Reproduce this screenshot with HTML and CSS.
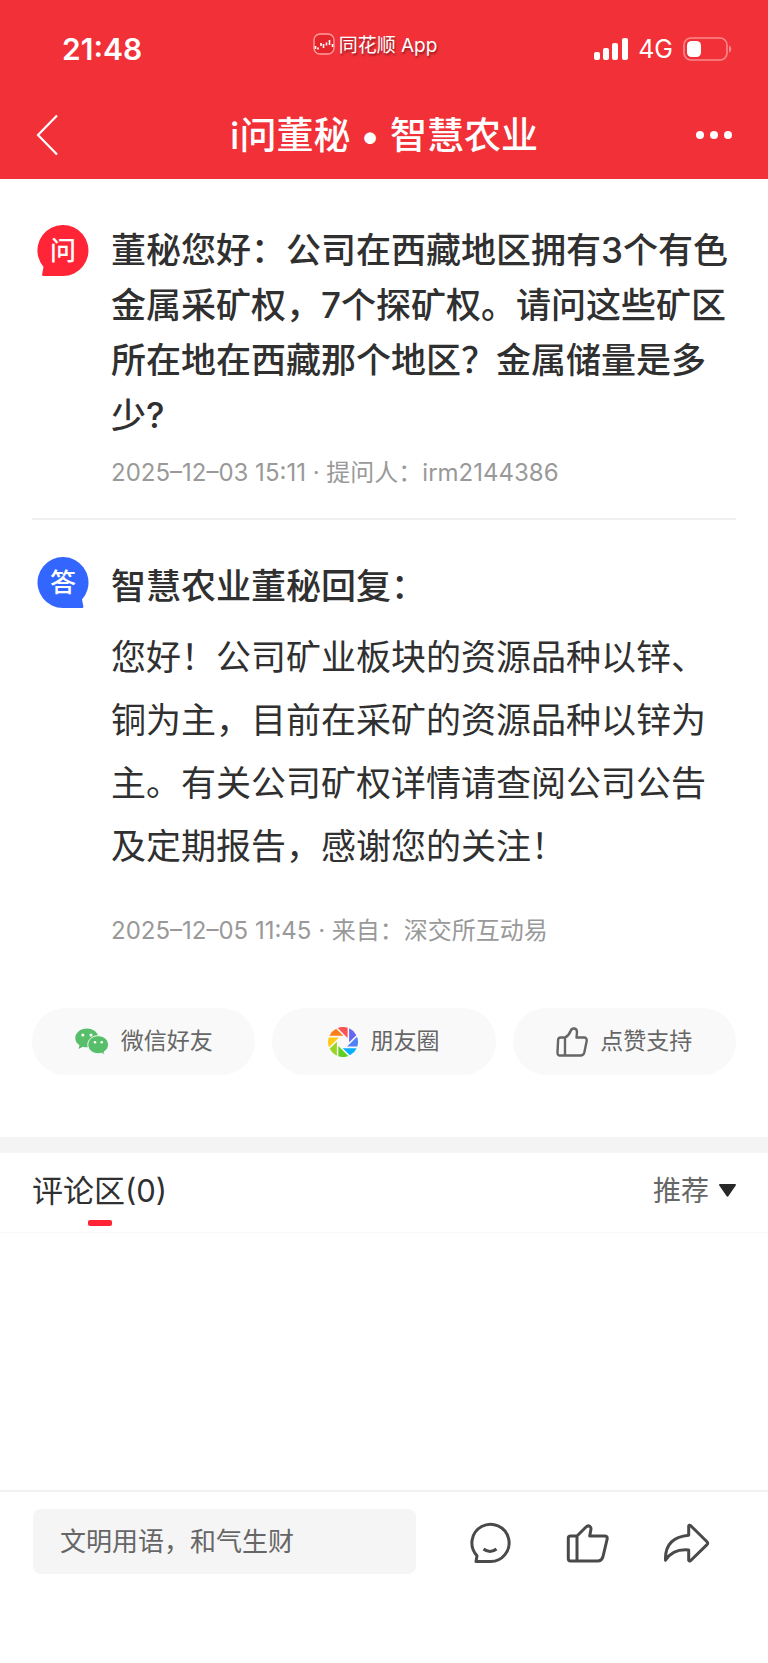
FILE: index.html
```html
<!DOCTYPE html>
<html lang="zh-CN">
<head>
  <meta charset="UTF-8" />
  <meta name="viewport" content="width=device-width, initial-scale=1.0"/>
  <title>i问董秘 · 智慧农业</title>
  <link rel="stylesheet" href="styles.css">
</head>
<body>
  <header>
    <div class="status">
      <span class="time">21:48</span>
      <span class="app-name">
        <svg width="22" height="22" viewBox="0 0 22 22">
          <rect x="1" y="1" width="20" height="20" rx="6" fill="#e5252c" stroke="#ff9a9d" stroke-width="1.4"/>
          <path d="M2.5 13v3M5 14.5v2M8 10v3M10.5 11v4M13.5 9.5v3M16.5 7v5M19.5 11v3" stroke="#fff" stroke-width="1.6"/>
        </svg>
        <span>同花顺 App</span>
      </span>
      <span class="signal">
        <svg width="34" height="22" viewBox="0 0 34 22" fill="#fff">
          <rect x="0" y="14" width="6" height="8" rx="2"/>
          <rect x="9" y="10" width="6" height="12" rx="2"/>
          <rect x="18" y="5" width="6" height="17" rx="2"/>
          <rect x="28" y="0" width="6" height="22" rx="2"/>
        </svg>
        <span>4G</span>
        <svg width="49" height="24" viewBox="0 0 49 24">
          <rect x="1" y="1" width="43" height="22" rx="7" fill="none" stroke="#fa898d" stroke-width="1.6"/>
          <path d="M46 8.5c3 1 3 6 0 7z" fill="#fa898d"/>
          <rect x="4" y="4" width="14" height="16" rx="4.5" fill="#fff"/>
        </svg>
      </span>
    </div>
    <nav>
      <button class="icon-btn" aria-label="返回">
        <svg width="22" height="42" viewBox="0 0 22 42" fill="none" stroke="#fff" stroke-width="2.2">
          <path d="M21 1.5L2 21l19 19.5"/>
        </svg>
      </button>
      <h1>i问董秘 • 智慧农业</h1>
      <button class="icon-btn" aria-label="更多">
        <svg width="36" height="10" viewBox="0 0 36 10" fill="#fff">
          <circle cx="4" cy="5" r="4"/>
          <circle cx="18" cy="5" r="4"/>
          <circle cx="32" cy="5" r="4"/>
        </svg>
      </button>
    </nav>
  </header>

  <main>
    <article class="post question">
      <div class="badge">
        <svg width="52" height="52" viewBox="0 0 52 52">
          <path fill="#ff2436" d="M26 51H6.5q-1.5 0-1.4-1.5l1.4-7.5A25.5 25.5 0 1 1 26 51z"/>
        </svg>
        <span>问</span>
      </div>
      <div class="content">
        <h2>董秘您好：公司在西藏地区拥有3个有色金属采矿权，7个探矿权。请问这些矿区所在地在西藏那个地区？金属储量是多少?</h2>
        <p class="meta">2025–12–03 15:11 · 提问人：irm2144386</p>
      </div>
    </article>

    <article class="post answer">
      <div class="badge">
        <svg width="52" height="52" viewBox="0 0 52 52">
          <path fill="#3366ff" d="M26 51h19q1.5 0 1.4-1.5L45 42.5A25.5 25.5 0 1 0 26 51z"/>
        </svg>
        <span>答</span>
      </div>
      <div class="content">
        <h2>智慧农业董秘回复：</h2>
        <p class="reply">您好！公司矿业板块的资源品种以锌、铜为主，目前在采矿的资源品种以锌为主。有关公司矿权详情请查阅公司公告及定期报告，感谢您的关注！</p>
        <p class="meta">2025–12–05 11:45 · 来自：深交所互动易</p>
      </div>
    </article>

    <div class="share">
      <button>
        <svg width="34" height="28" viewBox="0 0 34 28">
          <path fill="#57be6a" d="M12 .5C5.5.5.3 4.7.3 10c0 3 1.6 5.6 4.2 7.3L3.5 21l4.3-2.3c1.3.4 2.7.6 4.2.6 6.4 0 11.5-4.1 11.5-9.3S18.4.5 12 .5z"/>
          <path fill="#57be6a" stroke="#f9f9f9" d="M23.2 7.7c-5.8 0-10.4 4-10.4 9s4.6 9 10.4 9c1.2 0 2.4-.2 3.5-.5l3.1 1.8-.8-3.1c2.8-1.7 4.5-4.2 4.5-7.2 0-5-4.6-9-10.3-9z"/>
          <g fill="#fff">
            <circle cx="7.8" cy="7" r="1.5"/><circle cx="16" cy="7" r="1.5"/>
            <circle cx="20" cy="14.3" r="1.3"/><circle cx="26.7" cy="14.3" r="1.3"/>
          </g>
        </svg>
        <span>微信好友</span>
      </button>
      <button>
        <svg width="30" height="30" viewBox="-15 -15 30 30">
          <defs>
            <path id="blade" d="M-5.3-14A15 15 0 0 1 4.6-14.3V-4.1z"/>
          </defs>
          <use href="#blade" fill="#fa5452"/>
          <use href="#blade" fill="#6468f0" transform="rotate(45)"/>
          <use href="#blade" fill="#5082f6" transform="rotate(90)"/>
          <use href="#blade" fill="#05aeff" transform="rotate(135)"/>
          <use href="#blade" fill="#5fd021" transform="rotate(180)"/>
          <use href="#blade" fill="#9ad522" transform="rotate(225)"/>
          <use href="#blade" fill="#ffc917" transform="rotate(270)"/>
          <use href="#blade" fill="#ff7e18" transform="rotate(315)"/>
        </svg>
        <span>朋友圈</span>
      </button>
      <button>
        <svg width="32" height="30" viewBox="0 0 32 30" fill="none" stroke="#666" stroke-width="2.4" stroke-linejoin="round">
          <path d="M9 10.5H4.5Q2.3 10.5 2.1 13L1.5 25.5Q1.4 28.5 4 28.5H24.5Q27.5 28.5 28.3 25.5L30.7 14Q31 10.5 28 10.5H20.5L21 5Q21 1.5 17.8 1.5Q15.5 1.5 14.6 4Q13 8.5 9 10.5V28.5"/>
        </svg>
        <span>点赞支持</span>
      </button>
    </div>

    <section class="comments">
      <div class="comments-head">
        <h3>评论区(0)</h3>
        <div class="sort">
          <select aria-label="排序">
            <option>推荐</option>
            <option>最新</option>
          </select>
          <svg width="17" height="13" viewBox="0 0 17 13">
            <path fill="#282828" d="M1 0h15q1.500 0 .7 1.500L9.500 12q-1 1.500-2 0L.3 1.500Q-.5 0 1 0z"/>
          </svg>
        </div>
      </div>
    </section>
  </main>

  <footer>
    <input type="text" aria-label="发表评论" placeholder="文明用语，和气生财">
    <button class="icon-btn" aria-label="评论">
      <svg width="48" height="48" viewBox="0 0 48 48">
        <path d="M24 43.5H10L11 37.7A18.600 18.600 0 1 1 24 43.5z"/>
        <path d="M17.500 31q6.500 5 13 0"/>
      </svg>
    </button>
    <button class="icon-btn" aria-label="点赞">
      <svg width="48" height="48" viewBox="0 0 48 48">
        <path d="M13 18L22 9q2-2 4-.5 1.300 1.200.9 3L25.700 18H40.500q3.300 0 2.600 3.200L39 38.500Q37.800 43 33.500 43H6.500Q4.300 43 4.300 40.800V20.200Q4.300 18 6.500 18H13V43"/>
      </svg>
    </button>
    <button class="icon-btn" aria-label="分享">
      <svg width="48" height="48" viewBox="0 0 48 48">
        <path d="M26.700 17.300V8q.5-1.300 1.800-.5L45 23.800q1.300 1.400 0 2.800L28.500 42.800q-1.300.8-1.800-.5V32Q11 30.500 3.500 42.300 2.500 19.500 26.700 17.300z"/>
      </svg>
    </button>
  </footer>
</body>
</html>
```
FILE: styles.css
```css
* {
  box-sizing: border-box;
}

body {
  margin: 0;
  min-height: 100vh;
  display: flex;
  flex-direction: column;
  font-family: Inter, "Noto Sans CJK SC", sans-serif;
  background: #fff;
  color: #303030;
}

h1, h2, h3, p {
  margin: 0;
}

svg {
  display: block;
  flex-shrink: 0;
}

button {
  border: none;
  background: none;
  font-family: inherit;
  cursor: pointer;
}

.icon-btn {
  padding: 0;
}

/* Header */
header {
  background: #f23038;
  color: #fff;
}

.status {
  display: grid;
  grid-template-columns: 1fr auto 1fr;
  align-items: center;
  height: 91px;
  padding: 7px 36px 0 18px;
}

.time {
  padding-left: 44px;
  font-size: 30px;
  font-weight: 600;
}

.app-name {
  display: flex;
  align-items: center;
  gap: 4px;
  padding-bottom: 10px;
  font-size: 19px;
  text-shadow: 1px 2px 2px rgba(0, 0, 0, 0.4);
}

.app-name span {
  padding-bottom: 2px;
}

.signal {
  display: flex;
  align-items: center;
  justify-content: flex-end;
  gap: 10px;
  font-size: 25px;
}

nav {
  display: flex;
  align-items: center;
  justify-content: space-between;
  height: 88px;
  padding: 0 36px;
}

nav .icon-btn {
  width: 36px;
}

nav h1 {
  padding-bottom: 4px;
  font-size: 37px;
  font-weight: 500;
}

/* Question and answer */
.post {
  display: flex;
  gap: 22px;
  margin: 0 32px;
  padding-left: 5px;
}

.question {
  padding-top: 44px;
  padding-bottom: 25px;
  border-bottom: 2px solid #f0f0f0;
}

.answer {
  padding-top: 39px;
}

.badge {
  position: relative;
  flex-shrink: 0;
  width: 52px;
  height: 52px;
  margin-top: 2px;
}

.answer .badge {
  margin-top: -2px;
}

.badge span {
  position: absolute;
  inset: 0;
  color: #fff;
  font-size: 26px;
  font-weight: 500;
  line-height: 52px;
  text-align: center;
}

.content {
  flex: 1;
}

.content h2 {
  font-size: 35px;
  font-weight: 500;
  line-height: 55px;
}

.reply {
  margin-top: 12px;
  font-size: 35px;
  line-height: 63px;
}

.meta {
  margin-top: 10px;
  font-size: 24px;
  line-height: 40px;
  color: #999;
}

.answer .meta {
  margin-top: 33px;
}

/* Share buttons */
.share {
  display: flex;
  gap: 17px;
  padding: 57px 32px 62px;
}

.share button {
  flex: 1;
  display: flex;
  align-items: center;
  justify-content: center;
  gap: 12px;
  height: 67px;
  padding: 0;
  border-radius: 34px;
  background: #f9f9f9;
  font-size: 23px;
  color: #666;
}

.share span {
  padding-bottom: 5px;
}

/* Comments */
main {
  flex: 1;
}

.comments {
  border-top: 16px solid #f4f4f4;
}

.comments-head {
  display: flex;
  align-items: center;
  justify-content: space-between;
  height: 80px;
  padding: 0 32px 4px;
  border-bottom: 1px solid #f9f9f9;
}

.comments-head h3 {
  position: relative;
  font-size: 31px;
  font-weight: 400;
  line-height: 74px;
}

.comments-head h3::after {
  content: "";
  position: absolute;
  left: 50%;
  bottom: 2px;
  width: 24px;
  height: 6px;
  margin-left: -12px;
  border-radius: 2px;
  background: #ff2436;
}

.sort {
  display: flex;
  align-items: center;
  gap: 9px;
}

.sort select {
  appearance: none;
  border: none;
  padding: 0;
  background: none;
  font-family: inherit;
  font-size: 28px;
  color: #666;
}

/* Bottom bar */
footer {
  display: flex;
  align-items: center;
  gap: 50px;
  padding: 17px 58px 89px 33px;
  border-top: 2px solid #f2f2f2;
}

footer input {
  flex: 1;
  min-width: 0;
  height: 65px;
  padding: 0 27px;
  border: none;
  border-radius: 8px;
  background: #f5f5f5;
  font-family: inherit;
  font-size: 26px;
}

footer input::placeholder {
  color: #666;
}

footer svg {
  fill: none;
  stroke: #4a4a4a;
  stroke-width: 3;
  stroke-linejoin: round;
}
```
